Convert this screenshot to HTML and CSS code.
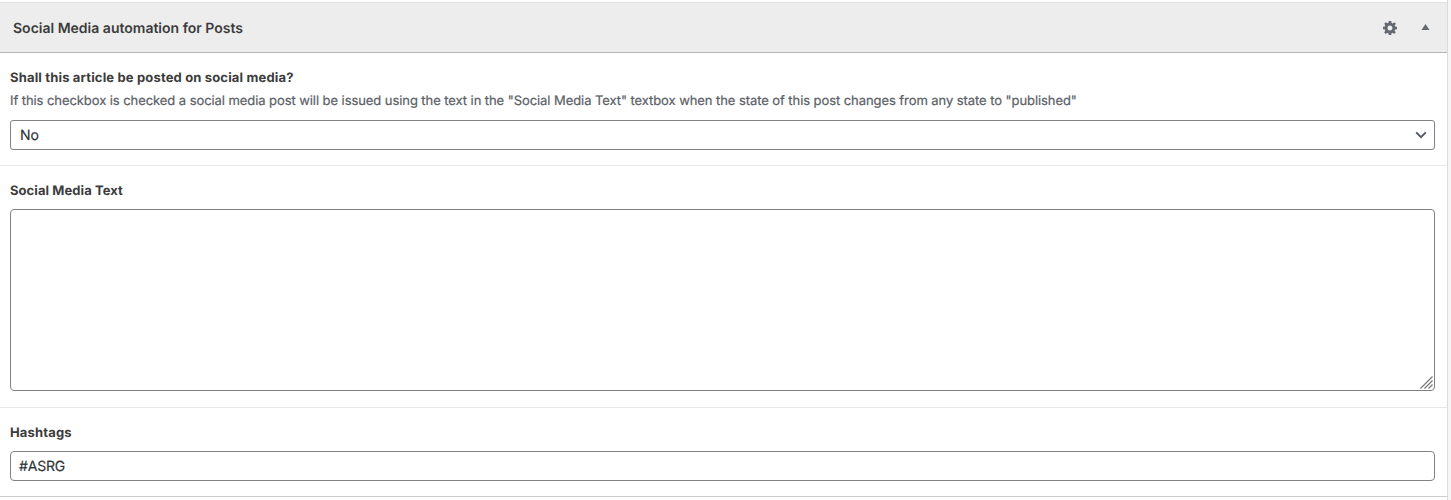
FILE: index.html
```html
<!DOCTYPE html>
<html lang="en">
<head>
<meta charset="utf-8">
<title>Social Media automation for Posts</title>
<link rel="stylesheet" href="styles.css">
</head>
<body>
<main class="postbox">
  <header class="postbox-header">
    <h2 class="title">Social Media automation for Posts</h2>
    <svg class="gear" width="14" height="14" viewBox="0 0 14 14"><path fill="#646970" fill-rule="evenodd" d="M5.7 0h2.6l.3 1.9 1.1.5L11.3 1.200 12.900 2.800 11.700 4.400l.4 1.200 1.900.2v2.500l-1.900.3-.5 1.100 1.200 1.600-1.700 1.700-1.500-1.200-1.100.5L8.300 14H5.700l-.3-1.800-1.100-.5-1.500 1.200L1.100 11.300 2.300 9.700l-.4-1.100L0 8.300V5.800l1.900-.3.4-1.100L1.200 2.800 2.800 1.200l1.500 1.100 1.100-.4zM7 4.500a2.500 2.500 0 1 0 0 5 2.500 2.500 0 0 0 0-5z"/></svg>
    <svg class="toggle" width="9" height="6" viewBox="0 0 9 6"><path fill="#646970" d="M4.500 0l4 6h-8z"/></svg>
  </header>
  <section class="field field-select">
    <h3 class="label label-question">Shall this article be posted on social media?</h3>
    <p class="description">If this checkbox is checked a social media post will be issued using the text in the "Social Media Text" textbox when the state of this post changes from any state to "published"</p>
    <div class="control select"><span class="value">No</span>
      <svg width="12" height="8" viewBox="0 0 12 8"><path d="M1.200 1.400L6 6.200l4.800-4.800" fill="none" stroke="#50575e" stroke-width="1.900"/></svg>
    </div>
  </section>
  <section class="field field-text">
    <h3 class="label label-text">Social Media Text</h3>
    <div class="control textarea">
      <svg width="13" height="13" viewBox="0 0 13 13"><path d="M.5 12.500l12-12M4.500 12.500l8-8M8.500 12.500l4-4" fill="none" stroke="#777" stroke-width="1.200"/></svg>
    </div>
  </section>
  <section class="field field-tags">
    <h3 class="label label-tags">Hashtags</h3>
    <div class="control input"><span class="value tag">#ASRG</span></div>
  </section>
</main>
</body>
</html>
```
FILE: styles.css
```css
* { box-sizing: border-box; }
body {
  margin: 0;
  height: 500px;
  overflow: hidden;
  background: #f6f6f6;
  font-family: Inter, "Liberation Sans", sans-serif;
  color: #3c3c3c;
  text-rendering: geometricPrecision;
}
h2, h3, p { margin: 0; white-space: nowrap; }
svg { display: block; flex: none; }
.postbox {
  width: 1448px;
  height: 500px;
  padding-top: 2px;
  background: #fff;
  border-right: 1px solid #dcdcde;
}
.postbox-header {
  display: flex;
  align-items: center;
  height: 51px;
  padding: 0 17px 0 13px;
  background: #ededed;
  border-top: 1px solid #e2e2e2;
  border-bottom: 1px solid #b5b6ba;
}
.title { flex: 1; padding-top: 2px; font-size: 14px; line-height: 20px; font-weight: 600; }
.gear { margin-right: 24.5px; margin-top: 1px; }
.toggle { margin-top: -1px; }
.field { padding: 15px 12px 0 10px; border-bottom: 1px solid #e8e8e8; }
.field-select { height: 113px; }
.field-text { height: 242px; }
.field-tags { height: 89px; border-bottom-color: #ccc; }
.label { font-size: 13px; line-height: 20px; font-weight: 700; }
.label-question { letter-spacing: 0.16px; }
.label-text { letter-spacing: 0.07px; }
.label-tags { letter-spacing: 0.15px; }
.description {
  margin-top: 3px;
  font-size: 13px;
  line-height: 20px;
  letter-spacing: -0.073px;
  color: #5b6067;
  -webkit-text-stroke: 0.2px #5b6067;
}
.control {
  display: flex;
  border: 1px solid #7f8287;
  border-radius: 4px;
  background: #fff;
  font-size: 14px;
  line-height: 28px;
  color: #2c3338;
}
.value {
  padding-top: 1px;
  -webkit-text-stroke: 0.15px #2c3338;
}
.select {
  height: 30px;
  margin-top: 9px;
  padding: 0 7px 0 9px;
  align-items: center;
  justify-content: space-between;
  border-radius: 3px;
}
.select .value { padding-top: 2px; }
.textarea {
  height: 182px;
  margin-top: 8px;
  align-items: flex-end;
  justify-content: flex-end;
  padding: 0 1px 1px 0;
}
.input { height: 30px; margin-top: 8px; padding-left: 8px; }
.tag { letter-spacing: -0.2px; }
```
